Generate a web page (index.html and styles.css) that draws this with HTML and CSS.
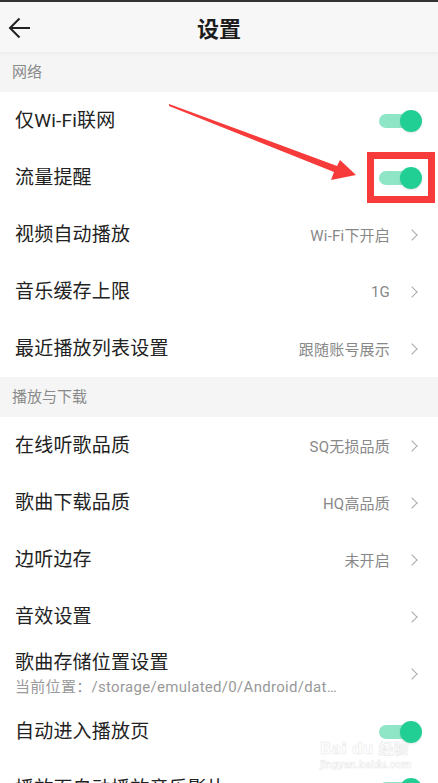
FILE: index.html
```html
<!DOCTYPE html>
<html>
<head>
  <title>设置</title>
  <meta charset="UTF-8">
  <link rel="stylesheet" href="styles.css">
</head>
<body>
  <div class="page">

    <!-- Top bar -->
    <header class="topbar">
      <svg class="back" width="24" height="22" viewBox="0 0 24 22">
        <path d="M22 11H2.5M11.5 1.5L2 11l9.5 9.5" fill="none" stroke="#222" stroke-width="2"/>
      </svg>
      <h1>设置</h1>
    </header>

    <div class="section-title">网络</div>
    <ul class="list">
      <li class="row"><span class="label">仅Wi-Fi联网</span><span class="toggle"></span></li>
      <li class="row"><span class="label">流量提醒</span><span class="toggle"></span></li>
      <li class="row"><span class="label">视频自动播放</span><span class="value">Wi-Fi下开启</span><span class="chevron"></span></li>
      <li class="row"><span class="label">音乐缓存上限</span><span class="value">1G</span><span class="chevron"></span></li>
      <li class="row"><span class="label">最近播放列表设置</span><span class="value">跟随账号展示</span><span class="chevron"></span></li>
    </ul>

    <div class="section-title">播放与下载</div>
    <ul class="list">
      <li class="row"><span class="label">在线听歌品质</span><span class="value">SQ无损品质</span><span class="chevron"></span></li>
      <li class="row"><span class="label">歌曲下载品质</span><span class="value">HQ高品质</span><span class="chevron"></span></li>
      <li class="row"><span class="label">边听边存</span><span class="value">未开启</span><span class="chevron"></span></li>
      <li class="row"><span class="label">音效设置</span><span class="chevron"></span></li>
      <li class="row row-tall">
        <div class="stack">
          <span class="label">歌曲存储位置设置</span>
          <span class="sub">当前位置：/storage/emulated/0/Android/dat…</span>
        </div>
        <span class="chevron"></span>
      </li>
      <li class="row"><span class="label">自动进入播放页</span><span class="toggle"></span></li>
      <li class="row"><span class="label">播放页自动播放音乐影片</span><span class="toggle"></span></li>
    </ul>

    <!-- Annotation: red arrow and box -->
    <svg class="annot-arrow" width="438" height="200" viewBox="0 0 438 200">
      <polygon points="169,104 337,166 340,160 356,175 331,180 334,172 169,106" fill="#f73b3b"/>
    </svg>
    <div class="annot-box"></div>

    <!-- Watermark -->
    <div class="watermark">
      <span class="wm-logo">Bai du 经验</span>
      <span class="wm-url">jingyan.baidu.com</span>
    </div>
  </div>
</body>
</html>
```

FILE: styles.css
```css
  html, body {
    margin: 0;
    height: 100%;
  }

  body {
    font-family: Roboto, "Noto Sans CJK SC", sans-serif;
    background-color: #fff;
    color: #222;
  }

  .page {
    position: relative;
    width: 438px;
    height: 783px;
    overflow: hidden;
  }

  /* Top bar */
  .topbar {
    position: relative;
    display: flex;
    align-items: center;
    justify-content: center;
    height: 50px;
    border-top: 2px solid #333;
    background-color: #f7f7f7;
    box-shadow: 0 2px 5px rgba(0, 0, 0, 0.04);
    z-index: 1;
  }

  .topbar h1 {
    margin: 0;
    font-size: 22px;
    font-weight: bold;
    color: #1c1c1c;
  }

  .back {
    position: absolute;
    left: 8px;
    top: 15px;
  }

  .section-title {
    height: 40px;
    line-height: 40px;
    padding-left: 12px;
    font-size: 15px;
    color: #8a8a8a;
    background-color: #f5f5f5;
  }

  .list {
    list-style: none;
    margin: 0;
    padding: 0;
  }

  .row {
    display: flex;
    align-items: center;
    height: 57px;
    padding: 0 16px 0 15px;
    box-sizing: border-box;
  }

  .row-tall {
    height: 58px;
  }

  .label {
    flex: 1;
    font-size: 19px;
    line-height: 26px;
    color: #222;
    letter-spacing: 0.2px;
  }

  .stack {
    flex: 1;
    display: flex;
    flex-direction: column;
  }

  .sub {
    font-size: 15px;
    line-height: 22px;
    color: #999;
    letter-spacing: 0.3px;
  }

  .value {
    font-size: 15px;
    color: #888;
    margin-right: 18px;
    letter-spacing: 0.2px;
  }

  .chevron {
    width: 7px;
    height: 7px;
    margin-right: 6px;
    border-top: 1.5px solid #aaa;
    border-right: 1.5px solid #aaa;
    transform: rotate(45deg);
  }

  /* Switch */
  .toggle {
    position: relative;
    width: 43px;
    height: 22px;
  }

  .toggle::before {
    content: "";
    position: absolute;
    left: 0;
    top: 4px;
    width: 38px;
    height: 14px;
    border-radius: 7px;
    background-color: #8ee6c7;
  }

  .toggle::after {
    content: "";
    position: absolute;
    right: 0;
    top: 0;
    width: 22px;
    height: 22px;
    border-radius: 50%;
    background-color: #21cf94;
    box-shadow: 0 1px 2px rgba(0, 0, 0, 0.12);
  }

  /* Annotation overlay */
  .annot-arrow {
    position: absolute;
    left: 0;
    top: 0;
    z-index: 2;
  }

  .annot-box {
    position: absolute;
    left: 367px;
    top: 152px;
    width: 54px;
    height: 37px;
    border: 7px solid #f73b3b;
    z-index: 2;
  }

  /* Watermark */
  .watermark {
    position: absolute;
    left: 320px;
    top: 737px;
    display: flex;
    flex-direction: column;
    align-items: flex-start;
    z-index: 2;
  }

  .wm-logo {
    font-family: "DejaVu Sans", "Noto Sans CJK SC", sans-serif;
    font-size: 15px;
    font-weight: bold;
    color: rgba(255, 255, 255, 0.6);
    -webkit-text-stroke: 0.5px #e6e6e6;
  }

  .wm-url {
    font-size: 11px;
    font-weight: bold;
    color: rgba(255, 255, 255, 0.6);
    -webkit-text-stroke: 0.4px #e6e6e6;
  }
```
